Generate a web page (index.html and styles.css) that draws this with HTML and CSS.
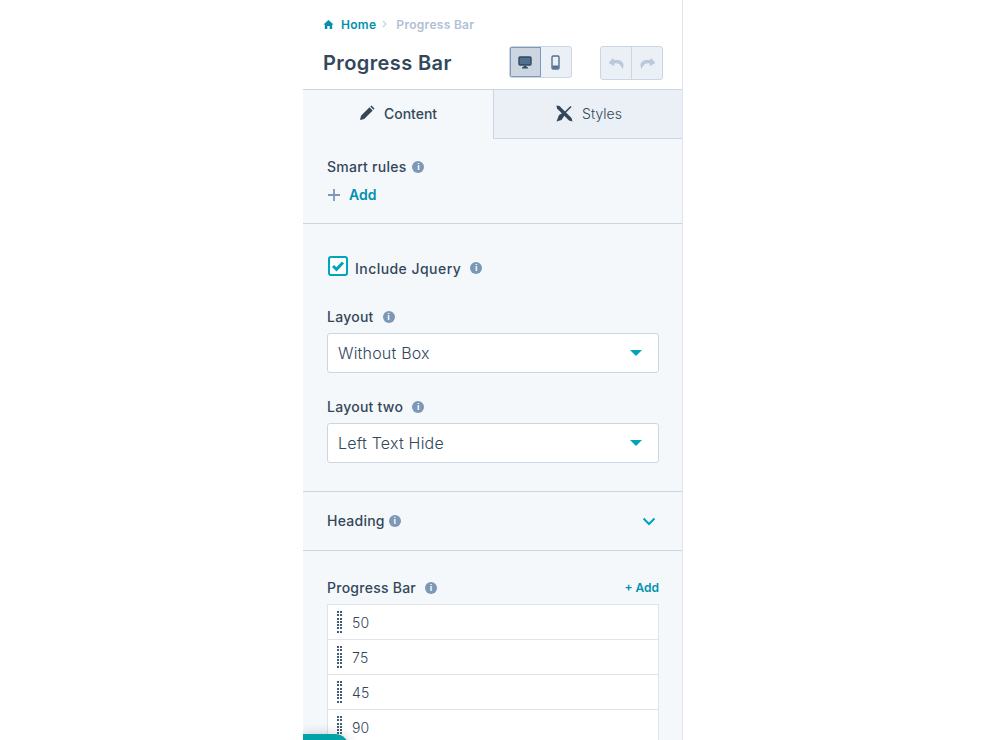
FILE: index.html
```html
<!DOCTYPE html>
<html lang="en">
<head>
    <meta charset="UTF-8">
    <title>Progress Bar</title>
    <link rel="stylesheet" href="styles.css">
</head>
<body>
    <div class="panel">
        <div class="panel-head">
            <div class="crumbs">
                <svg class="home-icon" viewBox="0 0 12 12"><path d="M6 1 L11.5 6 H10 V11 H7.3 V7.6 H4.7 V11 H2 V6 H.5 Z"/></svg>
                <a class="crumb-link">Home</a>
                <svg class="crumb-sep" viewBox="0 0 6 10"><path d="M1 1 L5 5 L1 9"/></svg>
                <span class="crumb-now">Progress Bar</span>
            </div>
            <div class="title-row">
                <h1>Progress Bar</h1>
                <div class="btn-group devices">
                    <button class="tool active">
                        <svg width="14" height="13" viewBox="0 0 14 13"><rect x="1" y="1" width="12" height="8" rx="1" fill="#516f90" stroke="#33475b" stroke-width="1.4"/><path d="M5.5 10h3v1.200h1.500v1.300H4v-1.300h1.500z" fill="#33475b"/></svg>
                    </button>
                    <button class="tool">
                        <svg width="9" height="15" viewBox="0 0 9 15"><rect x="1" y="1" width="7" height="13" rx="1.2" fill="none" stroke="#516f90" stroke-width="1.4"/><rect x="1.500" y="10.500" width="6" height="3" fill="#516f90"/></svg>
                    </button>
                </div>
                <div class="btn-group history">
                    <button class="tool">
                        <svg width="17" height="13" viewBox="0 0 17 13"><path fill="#b9c9da" d="M5 1 L.5 6 L6 9 L6.500 6.500 C10 5.800 13 7.500 14.500 12 C18 5.500 12 1.800 6.300 3.300 Z"/></svg>
                    </button>
                    <button class="tool">
                        <svg width="17" height="13" viewBox="0 0 17 13"><path fill="#b9c9da" d="M12 1 L16.500 6 L11 9 L10.500 6.500 C7 5.800 4 7.500 2.500 12 C-1 5.500 5 1.800 10.700 3.300 Z"/></svg>
                    </button>
                </div>
            </div>
        </div>

        <div class="tabs">
            <div class="tab current">
                <svg width="16" height="16" viewBox="0 0 16 16"><path fill="#33475b" d="M1 15 L2 10.800 L10.500 2.300 L13.700 5.500 L5.200 14 Z M11.300 1.500 L12.500 .5 L15.500 3.500 L14.500 4.700 Z"/></svg>
                <span>Content</span>
            </div>
            <div class="tab">
                <svg class="styles-icon" width="17" height="17" viewBox="0 0 17 17"><path fill="#33475b" d="M.5 .5 L3.500 1 L15.500 13 L16.500 16.500 L13 15.500 L1 3.500 Z"/><path stroke="#33475b" stroke-width="1.600" d="M15 1.500 L7 9.500"/><path fill="#33475b" d="M6.500 8 L3 10 L.5 16.500 L5.500 15 L8.500 10.500 Z"/></svg>
                <span>Styles</span>
            </div>
        </div>

        <section class="group rules">
            <div class="field-label">Smart rules <i class="info">i</i></div>
            <div class="add-rule">
                <svg width="14" height="14" viewBox="0 0 14 14"><path d="M7 1v12M1 7h12" stroke="#7c98b6" stroke-width="1.800"/></svg>
                <a class="add-link">Add</a>
            </div>
        </section>

        <section class="group options">
            <div class="check-row">
                <span class="checkbox">
                    <svg width="14" height="12" viewBox="0 0 14 12"><path d="M2 6 L5.500 9.300 L12 2.500" fill="none" stroke="#00a4bd" stroke-width="3"/></svg>
                </span>
                <span class="check-label">Include Jquery</span>
                <i class="info">i</i>
            </div>
            <div class="field">
                <div class="field-label">Layout <i class="info">i</i></div>
                <div class="select"><span>Without Box</span><b class="caret"></b></div>
            </div>
            <div class="field">
                <div class="field-label">Layout two <i class="info">i</i></div>
                <div class="select"><span>Left Text Hide</span><b class="caret"></b></div>
            </div>
        </section>

        <section class="group heading-row">
            <div class="field-label">Heading <i class="info">i</i></div>
            <svg width="14" height="9" viewBox="0 0 14 9"><path d="M1.500 1.500 L7 7 L12.500 1.500" fill="none" stroke="#00a4bd" stroke-width="2"/></svg>
        </section>

        <section class="bars">
            <div class="bars-head">
                <div class="field-label">Progress Bar <i class="info">i</i></div>
                <a class="add-small">+ Add</a>
            </div>
            <div class="bar-list">
                <div class="bar-item"><span class="grip"></span>50</div>
                <div class="bar-item"><span class="grip"></span>75</div>
                <div class="bar-item"><span class="grip"></span>45</div>
                <div class="bar-item"><span class="grip"></span>90</div>
            </div>
        </section>

        <div class="corner-tab"></div>
    </div>
</body>
</html>
```

FILE: styles.css
```css
html, body {
    margin: 0;
    padding: 0;
    height: 100%;
    overflow: hidden;
}

body {
    background: white;
    font-family: "Inter", "Noto Sans", sans-serif;
    color: #33475b;
}

.panel {
    width: 379px;
    height: 740px;
    margin-left: 303px;
    border-right: 1px solid #dfe3eb;
    background: #f5f8fa;
    position: relative;
    overflow: hidden;
}

.panel-head {
    height: 89px;
    background: white;
    padding: 17px 19px 0 20px;
    box-sizing: border-box;
}

.crumbs {
    display: flex;
    align-items: center;
    height: 14px;
    font-size: 12px;
    font-weight: 600;
    letter-spacing: .3px;
}

.home-icon {
    width: 11px;
    height: 11px;
    fill: #0091ae;
    margin-right: 7px;
}

.crumb-link {
    color: #0091ae;
}

.crumb-sep {
    width: 5px;
    height: 8px;
    fill: none;
    stroke: #b9c9da;
    stroke-width: 1.3;
    margin: 0 9px 0 6px;
}

.crumb-now {
    color: #b0c1d4;
}

.title-row {
    display: flex;
    align-items: flex-start;
    margin-top: 15px;
}

.title-row h1 {
    margin: 0;
    font-size: 20px;
    line-height: 34px;
    font-weight: 600;
    letter-spacing: .4px;
    color: #33475b;
    flex: 1;
}

.btn-group {
    display: flex;
    width: 63px;
    box-sizing: border-box;
    border: 1px solid #cbd6e2;
    border-radius: 3px;
    background: #eaf0f6;
    overflow: hidden;
}

.devices {
    height: 32px;
    margin-right: 28px;
}

.history {
    height: 34px;
}

.tool {
    flex: 1;
    padding: 0;
    border: none;
    background: none;
    display: flex;
    align-items: center;
    justify-content: center;
}

.history .tool:first-child {
    border-right: 1px solid #cbd6e2;
}

.tool.active {
    background: #cbd6e2;
    box-shadow: inset 0 0 0 1px #7c98b6;
}

.tabs {
    display: flex;
    height: 50px;
    border-top: 1px solid #cbd6e2;
    box-sizing: border-box;
}

.tab {
    flex: 1;
    display: flex;
    align-items: center;
    justify-content: center;
    gap: 9px;
    font-size: 14px;
    font-weight: 300;
    padding-bottom: 2px;
    background: #eaf0f6;
    border-bottom: 1px solid #cbd6e2;
}

.tab.current {
    flex: 0 0 190px;
    background: #f5f8fa;
    border-right: 1px solid #cbd6e2;
    border-bottom: none;
    font-weight: 500;
    padding-bottom: 3px;
}

.styles-icon {
    margin-left: 2px;
}

.group {
    border-bottom: 1px solid #cbd6e2;
    padding: 0 23px 0 24px;
}

.field-label {
    display: flex;
    align-items: center;
    font-size: 14px;
    font-weight: 500;
    line-height: 18px;
    letter-spacing: .25px;
    gap: 6px;
}

.info {
    display: inline-block;
    width: 12px;
    height: 12px;
    border-radius: 50%;
    background: #7c98b6;
    color: white;
    font: bold 9px/12px "Liberation Sans", sans-serif;
    letter-spacing: 0;
    text-align: center;
}

.rules {
    height: 85px;
    padding-top: 19px;
    box-sizing: border-box;
}

.add-rule {
    display: flex;
    align-items: center;
    gap: 8px;
    margin-top: 10px;
}

.add-link {
    color: #0091ae;
    font-size: 14px;
    font-weight: 600;
}

.options {
    height: 268px;
    box-sizing: border-box;
    padding-top: 32px;
}

.check-row {
    display: flex;
    align-items: center;
    height: 20px;
    padding-left: 1px;
    margin-bottom: 32px;
}

.checkbox {
    width: 16px;
    height: 16px;
    border: 2px solid #00a4bd;
    border-radius: 3px;
    background: white;
    display: flex;
    align-items: center;
    justify-content: center;
}

.check-label {
    font-size: 14px;
    font-weight: 500;
    letter-spacing: .45px;
    margin: 4px 9px 0 7px;
}

.check-row .info {
    margin-top: 4px;
}

.field {
    margin-bottom: 25px;
}

.field .info {
    margin-left: 3px;
}

.select {
    margin-top: 7px;
    height: 40px;
    box-sizing: border-box;
    border: 1px solid #cbd6e2;
    border-radius: 3px;
    background: white;
    display: flex;
    align-items: center;
    justify-content: space-between;
    padding: 0 16px 0 10px;
    font-size: 16px;
    font-weight: 300;
    letter-spacing: .2px;
}

.caret {
    width: 0;
    height: 0;
    border-left: 6px solid transparent;
    border-right: 6px solid transparent;
    border-top: 6px solid #00a4bd;
}

.heading-row {
    height: 59px;
    display: flex;
    align-items: center;
    justify-content: space-between;
    box-sizing: border-box;
    padding-right: 26px;
}

.heading-row .field-label {
    gap: 4px;
}

.bars {
    padding: 28px 23px 0 24px;
}

.bars-head {
    display: flex;
    align-items: center;
    justify-content: space-between;
    margin-bottom: 7px;
}

.bars-head .info {
    margin-left: 3px;
}

.add-small {
    color: #0091ae;
    font-size: 12px;
    font-weight: 600;
    margin-bottom: 2px;
}

.bar-list {
    border: 1px solid #dfe3eb;
    border-bottom: none;
    background: white;
}

.bar-item {
    height: 35px;
    box-sizing: border-box;
    border-bottom: 1px solid #dfe3eb;
    display: flex;
    align-items: center;
    padding-left: 9px;
    font-size: 14px;
    font-weight: 300;
    letter-spacing: .2px;
}

.grip {
    width: 5.5px;
    height: 22px;
    margin-right: 9.5px;
    background: repeating-linear-gradient(90deg, #425b76 0 2px, transparent 2px 3.5px);
    mask-image: repeating-linear-gradient(#000 0 2px, transparent 2px 3.3px);
    -webkit-mask-image: repeating-linear-gradient(#000 0 2px, transparent 2px 3.3px);
}

.corner-tab {
    position: absolute;
    left: 0;
    bottom: -30px;
    width: 46px;
    height: 36px;
    background: #00a4a8;
    border-top-right-radius: 14px;
    box-shadow: 0 0 12px rgba(0,0,0,0.2);
}
```
